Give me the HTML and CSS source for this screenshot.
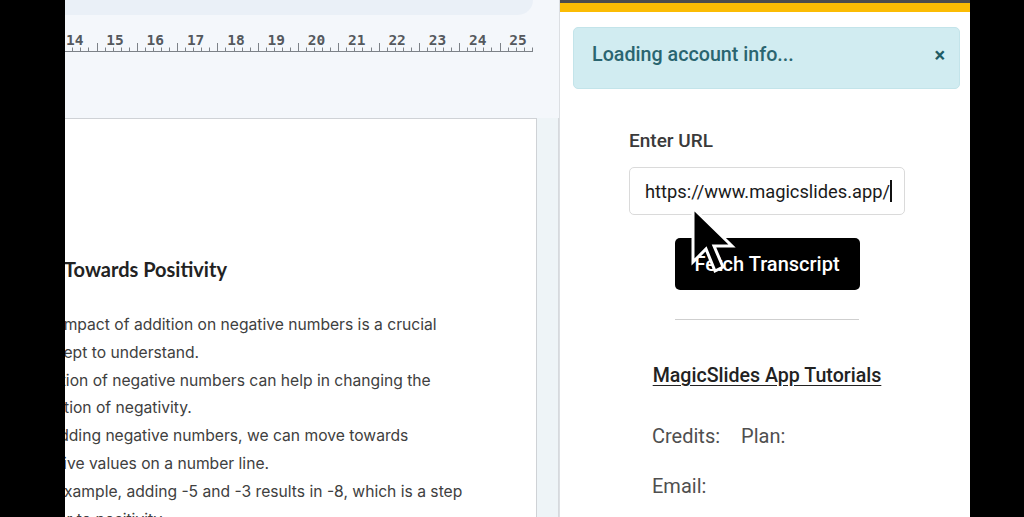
FILE: index.html
```html
<!DOCTYPE html>
<html>
<head>
<meta charset="utf-8">
<link rel="stylesheet" href="styles.css">
</head>
<body>
<div class="gutter"></div>
<main class="doc">
  <div class="toolbar"></div>
  <svg class="ruler" width="494" height="34" viewBox="0 0 494 34">
    <g class="nums">
      <text x="1" y="16">14</text>
      <text x="41.3" y="16">15</text>
      <text x="81.6" y="16">16</text>
      <text x="121.9" y="16">17</text>
      <text x="162.2" y="16">18</text>
      <text x="202.5" y="16">19</text>
      <text x="242.8" y="16">20</text>
      <text x="283.1" y="16">21</text>
      <text x="323.4" y="16">22</text>
      <text x="363.7" y="16">23</text>
      <text x="404" y="16">24</text>
      <text x="444.3" y="16">25</text>
    </g>
    <line x1="0" y1="22.5" x2="468" y2="22.5" stroke="#7d8288" stroke-width="1"/>
    <g id="ticks" stroke="#7d8288" stroke-width="1"></g>
  </svg>
  <div class="docrow">
    <section class="page">
      <h2 class="heading">Towards Positivity</h2>
      <div class="body">
        <div class="line">The impact of addition on negative numbers is a crucial</div>
        <div class="line">concept to understand.</div>
        <div class="line">Addition of negative numbers can help in changing the</div>
        <div class="line">direction of negativity.</div>
        <div class="line">By adding negative numbers, we can move towards</div>
        <div class="line">positive values on a number line.</div>
        <div class="line">For example, adding -5 and -3 results in -8, which is a step</div>
        <div class="line">closer to positivity.</div>
      </div>
    </section>
    <div class="strip"></div>
  </div>
</main>
<aside class="panel">
  <div class="bar-dark"></div>
  <div class="bar-yellow"></div>
  <div class="alert">
    <span class="alert-text">Loading account info...</span>
    <span class="alert-close">×</span>
  </div>
  <div class="form">
    <label class="label">Enter URL</label>
    <div class="input"><span class="val">https://www.magicslides.app/</span><span class="caret"></span></div>
    <button class="btn">Fetch Transcript</button>
    <div class="rule"></div>
    <a class="link">MagicSlides App Tutorials</a>
    <div class="info">
      <div class="row"><span>Credits:</span><span>Plan:</span></div>
      <div class="row">Email:</div>
    </div>
  </div>
</aside>
<div class="gutter-r"></div>
<svg class="cursor" width="50" height="72" viewBox="0 0 50 72">
  <path d="M3 3 L3 57 L16 44 L25 66 L33 62 L24 41 L42 41 Z" fill="#000" stroke="#fff" stroke-width="3" stroke-linejoin="miter"/>
</svg>
<script>
  (function(){
    var g = document.getElementById('ticks');
    var u = 40.3, s = u/5, out = '';
    for (var k = -1; k < 12; k++) {
      for (var j = 0; j < 5; j++) {
        var x = 31.5 + k*u + j*s;
        if (x < 0 || x > 468) continue;
        var xr = Math.round(x) + 0.5;
        var y1 = j === 0 ? 14 : 18.5;
        out += '<line x1="'+xr+'" y1="'+y1+'" x2="'+xr+'" y2="22.5"/>';
      }
    }
    g.innerHTML = out;
  })();
</script>
</body>
</html>
```
FILE: styles.css
```css
* { box-sizing: border-box; }
html, body { margin: 0; padding: 0; }
body {
  width: 1024px;
  height: 517px;
  overflow: hidden;
  background: #000;
  display: flex;
  position: relative;
}
.gutter { width: 65px; flex: none; background: #000; }
.gutter-r { width: 54px; flex: none; background: #000; }

.doc {
  width: 494px;
  flex: none;
  background: #f4f7fb;
  overflow: hidden;
  display: flex;
  flex-direction: column;
}
.toolbar {
  height: 15px;
  width: 468px;
  background: #eaf0f7;
  border-bottom-right-radius: 16px;
  flex: none;
}
.ruler {
  display: block;
  margin-top: 14px;
  flex: none;
}
.ruler .nums text {
  font-family: "DejaVu Sans Mono", monospace;
  font-size: 14.5px;
  font-weight: bold;
  fill: #55595e;
}
.docrow {
  margin-top: 55px;
  flex: 1;
  display: flex;
}
.page {
  margin-left: -40px;
  width: 512px;
  flex: none;
  background: #fff;
  border: 1px solid #cfd2d6;
  border-bottom: none;
  padding-top: 138px;
}
.strip {
  width: 22px;
  flex: none;
  background: #eef4f7;
  border-right: 1px solid #d6d9dd;
}
.heading {
  margin: 0 0 0 38px;
  font-family: Lato, "Liberation Sans", sans-serif;
  font-weight: bold;
  font-size: 20px;
  line-height: 24px;
  color: #222;
}
.body {
  margin-top: 30px;
  padding-left: 1px;
  font-family: Inter, "Liberation Sans", sans-serif;
  font-size: 15.65px;
  line-height: 27.8px;
  color: #404040;
}
.line { white-space: nowrap; }

.panel {
  width: 411px;
  flex: none;
  background: #fff;
  border-left: 1px solid #dcdfe3;
  display: flex;
  flex-direction: column;
  font-family: Roboto, "Liberation Sans", sans-serif;
}
.bar-dark { height: 3px; background: #4c4c4c; flex: none; }
.bar-yellow { height: 9px; background: #fbbc04; flex: none; }
.alert {
  margin: 15px 10px 0 13px;
  height: 62px;
  background: #d1ecf1;
  border: 1px solid #c3e4ea;
  border-radius: 5px;
  display: flex;
  align-items: flex-start;
  justify-content: space-between;
  padding: 14px 14px 0 18px;
  color: #0f5a66;
}
.alert-text {
  font-size: 19.7px;
  line-height: 26px;
  font-weight: 500;
  color: #2a6570;
}
.alert-close {
  font-size: 20px;
  line-height: 20px;
  font-weight: bold;
  margin-top: 3px;
  color: #1f5b64;
}
.form {
  margin-left: 69px;
  width: 276px;
  display: flex;
  flex-direction: column;
}
.label {
  margin-top: 41px;
  font-size: 19px;
  line-height: 22px;
  font-weight: 500;
  color: #3a3a3a;
}
.input {
  margin-top: 15px;
  height: 48px;
  border: 1px solid #dadada;
  border-radius: 5px;
  display: flex;
  align-items: center;
  padding-left: 15px;
  font-size: 18.3px;
  color: #1a1a1a;
}
.caret {
  width: 1.5px;
  height: 22px;
  background: #111;
  margin-left: 0;
}
.btn {
  margin: 23px auto 0;
  width: 185px;
  height: 52px;
  background: #000;
  color: #fff;
  border: none;
  border-radius: 5px;
  font-family: Roboto, "Liberation Sans", sans-serif;
  font-size: 20px;
  font-weight: 500;
  padding: 0;
}
.rule {
  margin: 29px auto 0;
  width: 184px;
  height: 1px;
  background: #cfcfcf;
}
.link {
  margin-top: 44px;
  align-self: center;
  font-size: 19.6px;
  line-height: 24px;
  font-weight: 500;
  color: #222;
  text-decoration: underline;
  text-underline-offset: 3px;
}
.info {
  margin-top: 37px;
  padding-left: 23px;
  display: flex;
  flex-direction: column;
  gap: 28px;
  font-size: 20px;
  line-height: 22px;
  color: #4f4f4f;
}
.row { display: flex; gap: 21px; }

.cursor {
  position: absolute;
  left: 690px;
  top: 205px;
}
```
